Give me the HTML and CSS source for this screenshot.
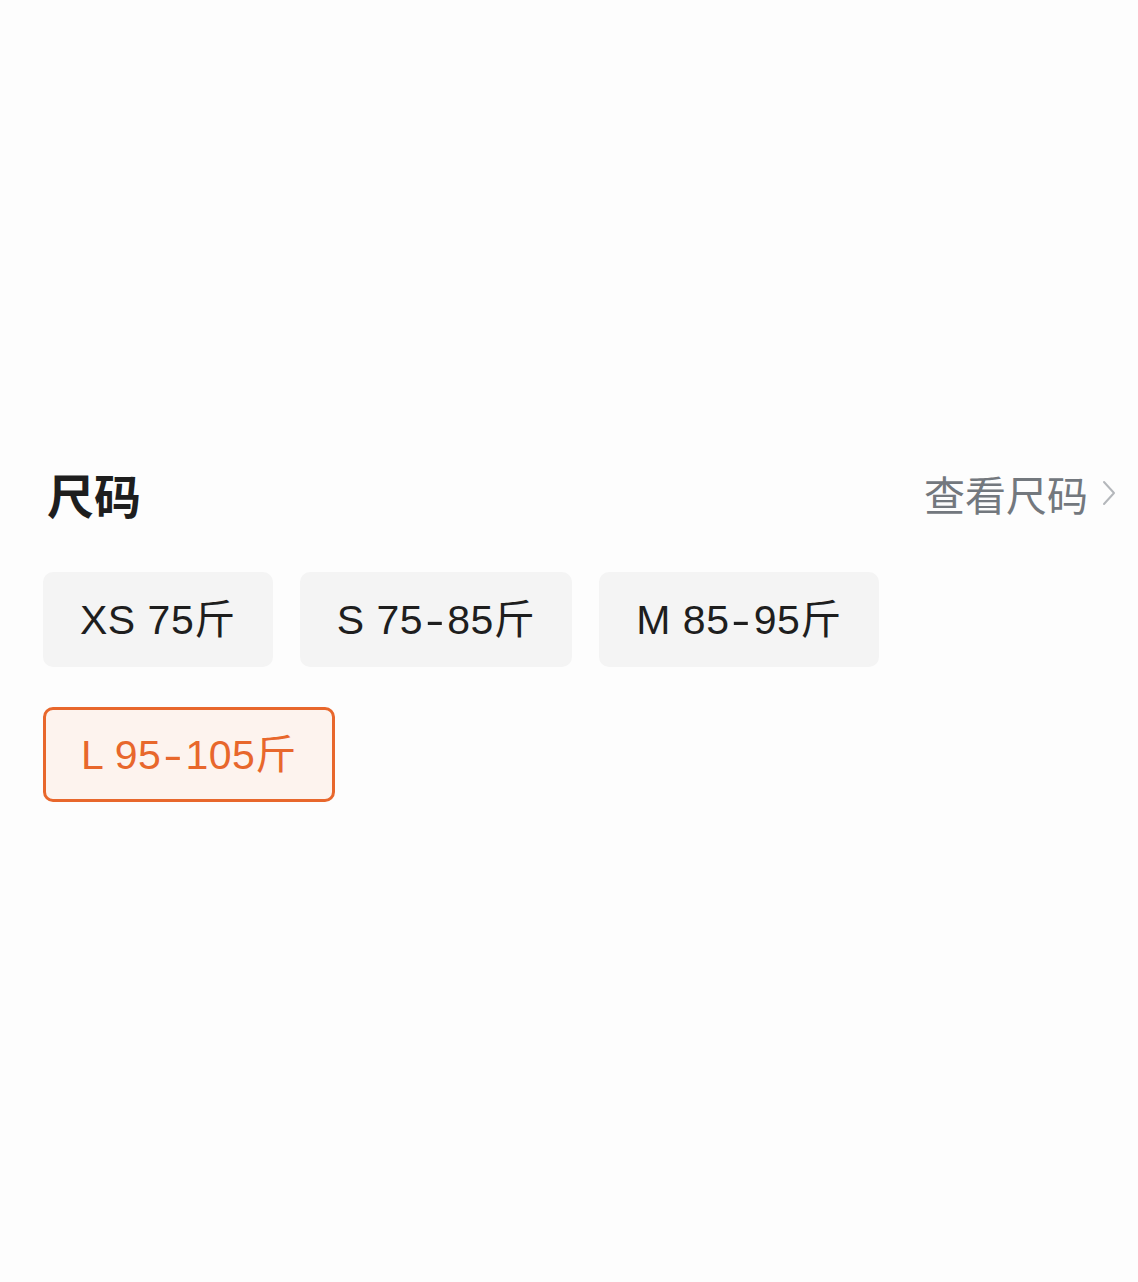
FILE: index.html
```html
<!DOCTYPE html>
<html lang="zh-CN">

<head>
  <meta charset="UTF-8" />
  <meta name="viewport" content="width=device-width, initial-scale=1.0" />
  <title>尺码</title>
  <link rel="stylesheet" href="styles.css">
</head>

<body>
  <div class="size-panel">
    <div class="panel-head">
      <h2 class="panel-title">尺码</h2>
      <a class="size-guide" href="#">
        查看尺码
        <svg class="chevron" viewBox="0 0 14 26" width="14" height="26">
          <path d="M2 2 L12 13 L2 24" fill="none" stroke="#b4b7bb" stroke-width="2" stroke-linecap="round" stroke-linejoin="round" />
        </svg>
      </a>
    </div>

    <div class="size-list">
      <button class="size-chip">XS 75斤</button>
      <button class="size-chip">S 75<span class="dash">-</span>85斤</button>
      <button class="size-chip">M 85<span class="dash">-</span>95斤</button>
      <button class="size-chip active">L 95<span class="dash">-</span>105斤</button>
    </div>
  </div>
</body>

</html>
```

FILE: styles.css
```css
:root {
  --page-bg: #fdfdfd;
  --chip-bg: #f4f4f4;
  --text-dark: #1e1e1e;
  --text-grey: #73787e;
  --accent: #e8672c;
  --accent-bg: #fdf3ee;
}

body {
  margin: 0;
  background-color: var(--page-bg);
  font-family: "Liberation Sans", "Noto Sans CJK SC", sans-serif;
  color: var(--text-dark);
}

.size-panel {
  padding: 464px 22px 0 43px;
}

.panel-head {
  display: flex;
  align-items: center;
  justify-content: space-between;
  height: 58px;
}

.panel-title {
  margin: 0 0 0 4px;
  font-family: "Noto Sans CJK SC", sans-serif;
  font-size: 47px;
  font-weight: 700;
  line-height: 1;
}

.size-guide {
  display: flex;
  align-items: center;
  gap: 14px;
  margin-left: -4px;
  font-family: "Noto Sans CJK SC", sans-serif;
  font-size: 41px;
  line-height: 1;
  color: var(--text-grey);
  text-decoration: none;
}

.size-list {
  display: flex;
  flex-wrap: wrap;
  gap: 40px 27px;
  margin-top: 50px;
  max-width: 900px;
}

.size-chip {
  height: 95px;
  padding: 0 35px 8px;
  border: 2px solid var(--chip-bg);
  border-radius: 10px;
  background-color: var(--chip-bg);
  font-family: "Liberation Sans", "Noto Sans CJK SC", sans-serif;
  font-size: 41px;
  letter-spacing: 0.5px;
  color: var(--text-dark);
  cursor: pointer;
}

.size-chip .dash {
  display: inline-block;
  margin: 0 5px;
  transform: scaleX(1.4);
}

.size-chip.active {
  border: 3px solid var(--accent);
  background-color: var(--accent-bg);
  color: var(--accent);
}
```
